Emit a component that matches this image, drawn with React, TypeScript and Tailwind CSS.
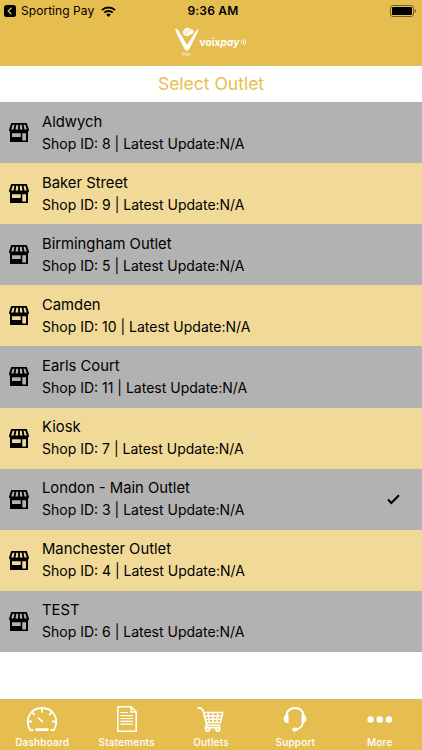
import React from 'react';

interface Outlet {
    id: number;
    name: string;
    selected?: boolean;
}

const outlets: Outlet[] = [
    { id: 8, name: 'Aldwych' },
    { id: 9, name: 'Baker Street' },
    { id: 5, name: 'Birmingham Outlet' },
    { id: 10, name: 'Camden' },
    { id: 11, name: 'Earls Court' },
    { id: 7, name: 'Kiosk' },
    { id: 3, name: 'London - Main Outlet', selected: true },
    { id: 4, name: 'Manchester Outlet' },
    { id: 6, name: 'TEST' },
];

const StoreIcon = () => (
    <svg className="w-5 h-[19px] shrink-0" viewBox="0 0 20 19">
        {/* awning with its four light stripes */}
        <path
            fillRule="evenodd"
            d="M2.2 0h15.600L20 6.800c0 2.500-3.700 2.900-5 1.200-1.300 1.300-3.700 1.300-5 0-1.300 1.300-3.700 1.300-5 0C3.700 9.700 0 9.300 0 6.800zM3.700 1.700 2.200 6.600h2.300l1-4.900zM7.300 1.700l-.8 4.900h2.600V1.700zM10.900 1.700v4.900h2.600l-.8-4.900zM14.500 1.700l1 4.900h2.300l-1.500-4.900z"
        />
        {/* walls, window and door */}
        <path fillRule="evenodd" d="M1 8h18v11H1zM3 10.200v3.900h8.700v-3.900zM13.300 10.200v7.200h3.700v-7.200z" />
    </svg>
);

const CheckIcon = () => (
    <svg className="w-[13px] h-[11px]" viewBox="0 0 13 11" fill="none" stroke="#000" strokeWidth="2.1">
        <path d="m1 5.6 3.3 3.4L12 1.3" />
    </svg>
);

const WifiIcon = () => (
    <svg className="w-[15px] h-[11px] shrink-0" viewBox="0 0 15 11" fill="none" stroke="#000" strokeWidth="2">
        <path d="M.9 4.1a9.4 9.4 0 0 1 13.2 0" />
        <path d="M3.3 6.6a6 6 0 0 1 8.4 0" />
        <path d="M7.5 10.9 5.2 8.6a3.3 3.3 0 0 1 4.6 0z" fill="#000" stroke="none" />
    </svg>
);

const BatteryIcon = () => (
    <svg className="w-[27px] h-3" viewBox="0 0 27 12">
        <rect x=".5" y=".5" width="23" height="11" rx="2.5" fill="none" stroke="#000" strokeOpacity=".5" />
        <rect x="2" y="2" width="20" height="8" rx="1" />
        <path d="M24.7 4c1.7.4 1.7 3.6 0 4z" fillOpacity=".5" />
    </svg>
);

const Logo = () => (
    <div className="flex h-[30px] w-[73px] text-white">
        <div className="flex w-6 shrink-0 flex-col items-center">
            <svg className="w-6 h-6 shrink-0" viewBox="0 0 24 24" fill="#fff">
                <path d="M0 1.500c1.700.2 3 1.100 3.700 2.600l8.400 13.800L20 5.500c.9-1.700 2-2.700 4-3-1 1.300-1.500 2.500-2.100 4.200L14.300 22c-1.300 2.200-3.500 2.200-4.700 0L2 7.400C1.300 5.400.8 3.500 0 1.500z" />
                <path d="M7.700 5.600C8 3 10.200 1 13 .5l5 2.400c.8 1.700.3 3.300-1.200 4.200l-4.400 2.200-3.600-1z" />
                <path d="m9.200 4 4 2.600M11 2.300l4.400 3M13.400 1.400l3.400 2.300M8.800 6l3 2" fill="none" stroke="#e6be50" strokeWidth=".6" />
            </svg>
            <span className="text-[5px] leading-[6px] italic opacity-80">Pay</span>
        </div>
        <div className="ml-px mt-[9px] flex h-3 items-center text-[10px] leading-3 font-bold tracking-[0.15px]">
            <span>voix</span>
            <span className="italic">pay</span>
            <svg className="w-[7px] h-2 shrink-0 ml-px" viewBox="0 0 7 8" fill="none" stroke="#fff" strokeWidth=".9">
                <path d="M1 2.8q1 1.2 0 2.4M2.7 1.7q2 2.3 0 4.6M4.4.6q3 3.4 0 6.8" />
            </svg>
        </div>
    </div>
);

const GaugeIcon = () => (
    <svg className="w-8 h-[25px]" viewBox="0 0 32 25" fill="none" stroke="#fff" strokeWidth="1.8">
        <path d="M7.500 23.200H4.200C-1.500 13.500 3.400 1 16 1s17.500 12.500 11.800 22.200h-3.300" strokeLinejoin="round" />
        <path d="M16 1v4.500M6.200 5.300l2.600 2.800M25.800 5.300l-2.600 2.800M1.500 14.500h4.600M30.500 14.500h-4.600" />
        <path d="m12 10.500 4.800 4.700" strokeWidth="1.700" />
        <path d="M9.500 22.600h13" strokeWidth="2.800" />
    </svg>
);

const DocumentIcon = () => (
    <svg className="w-5 h-[26px]" viewBox="0 0 20 26" fill="none" stroke="#fff" strokeWidth="1.500">
        <path d="M.8.8h13.400l5 5.200v19.200H.8zM14 .8V6h5.200" />
        <path d="M3.500 6.500h7.500M3.500 9.700h12.500M3.500 12.500h12.500M3.500 15.300h12.500M3.500 18.100h12.500" strokeWidth="1.200" />
    </svg>
);

const CartIcon = () => (
    <svg className="w-[27px] h-[25px]" viewBox="0 0 27 25" fill="none" stroke="#fff" strokeWidth="1.800">
        <path d="M.5 1h3.300L6 3.500l4 14.800h13.500" strokeLinejoin="round" />
        <path d="M6.500 5.500h19.300l-2.300 10H9.200M7.500 9h17.600M8.300 12.200h16M11 5.500l1.300 10M15.800 5.500v10M20.800 5.500l-1 10" strokeWidth="1.400" />
        <path d="M10 18.300c-2 0-2.300 2.300-.5 2.500h14" strokeWidth="1.500" />
        <circle cx="10.700" cy="22.300" r="1.800" fill="#e6be50" />
        <circle cx="20.800" cy="22.300" r="1.800" fill="#e6be50" />
    </svg>
);

const HeadsetIcon = () => (
    <svg className="w-6 h-[25px]" viewBox="0 0 24 25" fill="none" stroke="#fff" strokeWidth="1.800">
        <path d="M3.300 8.300C4.200 3.700 7.500 1 12 1s7.800 2.700 8.700 7.300" />
        <path d="M20.300 15c-.8 4.500-3 6.800-7.500 7.200" strokeWidth="1.500" />
        <path d="M5.500 7v9.500C2.600 16 .6 14.200.6 11.700S2.600 7.500 5.500 7zM18.500 7v9.500c2.900-.5 4.900-2.300 4.900-4.800S21.400 7.500 18.500 7z" fill="#fff" stroke="none" />
        <ellipse cx="12" cy="22.500" rx="2.700" ry="2.100" fill="#fff" stroke="none" />
    </svg>
);

const MoreIcon = () => (
    <svg className="w-[26px] h-[25px]" viewBox="0 0 26 25" fill="#fff">
        <circle cx="3.500" cy="12.500" r="3.200" />
        <circle cx="12.700" cy="12.500" r="3.200" />
        <circle cx="21.900" cy="12.500" r="3.200" />
    </svg>
);

const tabs = [
    { label: 'Dashboard', icon: <GaugeIcon /> },
    { label: 'Statements', icon: <DocumentIcon /> },
    { label: 'Outlets', icon: <CartIcon /> },
    { label: 'Support', icon: <HeadsetIcon /> },
    { label: 'More', icon: <MoreIcon /> },
];

const OutletRow: React.FC<{ outlet: Outlet; striped: boolean }> = ({ outlet, striped }) => (
    <li className={`flex flex-1 items-center pl-[9px] pr-[22px] ${striped ? 'bg-[#f1da98]' : 'bg-[#b2b2b2]'}`}>
        <StoreIcon />
        <div className="ml-[13px] flex-1 leading-[22px] whitespace-nowrap">
            <p className="text-[14.8px]">{outlet.name}</p>
            <p className="text-[14px]">Shop ID: {outlet.id} | Latest Update:N/A</p>
        </div>
        {outlet.selected && <CheckIcon />}
    </li>
);

const App = () => {
    return (
        <div className="flex h-[750px] w-[422px] flex-col overflow-hidden bg-white font-['Inter',sans-serif] text-black">
            {/* Header */}
            <header className="h-[66px] shrink-0 border-b border-[#d9bb68] bg-[#e6be50]">
                <div className="grid h-[22px] grid-cols-3 items-center pl-1 pr-[5px]">
                    <div className="flex items-center whitespace-nowrap">
                        <svg className="w-3 h-3 shrink-0" viewBox="0 0 12 12">
                            <rect width="12" height="12" rx="2.500" />
                            <path d="M7.500 2.700 4.200 6l3.300 3.300" fill="none" stroke="#e6be50" strokeWidth="1.300" />
                        </svg>
                        <span className="ml-[5px] mr-[7px] text-[12px] tracking-[0.05px]">Sporting Pay</span>
                        <WifiIcon />
                    </div>
                    <span className="pl-[5px] text-center text-[12px] font-semibold tracking-[0.2px]">9:36 AM</span>
                    <div className="flex justify-end"><BatteryIcon /></div>
                </div>
                <div className="flex justify-center pt-[5px]">
                    <Logo />
                </div>
            </header>

            <h1 className="flex h-9 shrink-0 items-center justify-center text-[17.5px] text-[#e6be50]">Select Outlet</h1>

            <ul className="flex h-[550px] shrink-0 flex-col">
                {outlets.map((outlet, i) => (
                    <OutletRow key={outlet.id} outlet={outlet} striped={i % 2 === 1} />
                ))}
            </ul>

            {/* Tab bar */}
            <nav className="mt-auto grid h-[51px] shrink-0 grid-cols-5 border-t border-[#d9bb68] bg-[#e6be50] text-white">
                {tabs.map(tab => (
                    <button key={tab.label} className="flex flex-col items-center">
                        <span className="flex h-9 items-center pb-px pt-[3px]">{tab.icon}</span>
                        <span className="text-[10px] leading-3 font-medium tracking-[0.2px]">{tab.label}</span>
                    </button>
                ))}
            </nav>
        </div>
    );
};

export default App;
